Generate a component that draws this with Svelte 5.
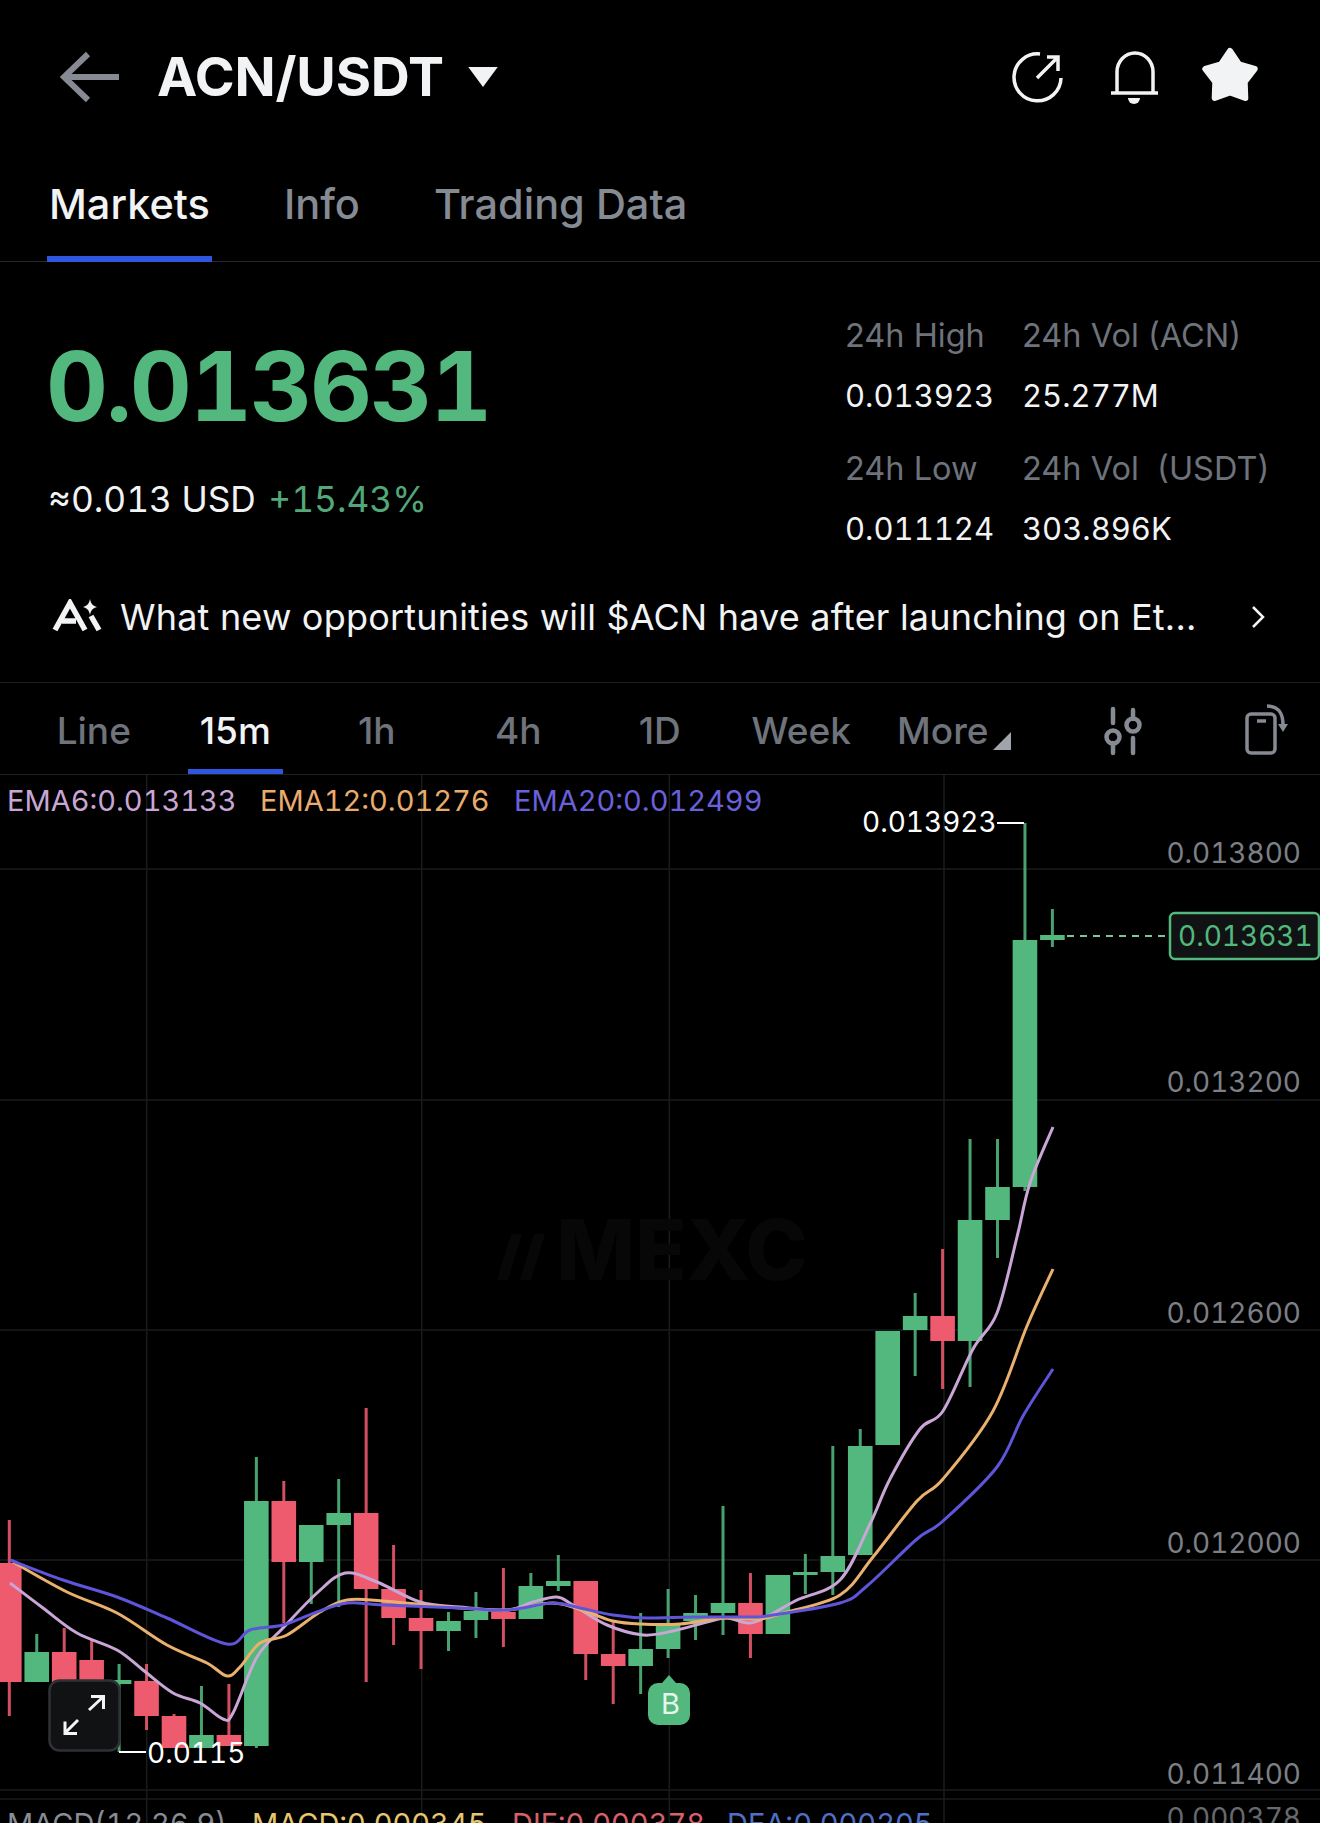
<script>
  const G = '#52b87e', R = '#ee5a6e';
  // [bodyTop, bodyBottom, wickTop, wickBottom, colour]
  const raw = [
    [1563,1682,1520,1716,R],[1652,1682,1634,1682,G],[1652,1682,1628,1682,R],[1660,1682,1640,1682,R],
    [1680,1684,1664,1752,G],[1681,1716,1664,1730,R],[1716,1748,1714,1748,R],[1735,1748,1686,1748,G],
    [1735,1746,1684,1746,R],[1501,1746,1457,1748,G],[1501,1562,1481,1623,R],[1525,1562,1525,1604,G],
    [1513,1525,1479,1607,G],[1513,1589,1408,1682,R],[1589,1618,1545,1645,R],[1618,1631,1590,1669,R],
    [1621,1631,1612,1651,G],[1611,1620,1592,1638,G],[1612,1619,1568,1647,R],[1586,1619,1573,1619,G],
    [1581,1586,1555,1591,G],[1581,1654,1581,1680,R],[1654,1666,1620,1704,R],[1649,1666,1613,1694,G],
    [1625,1649,1589,1658,G],[1613,1621,1595,1640,G],[1603,1613,1506,1635,G],[1603,1634,1573,1658,R],
    [1575,1634,1575,1634,G],[1572,1575,1554,1594,G],[1556,1572,1446,1595,G],[1446,1555,1429,1555,G],
    [1331,1445,1331,1445,G],[1316,1330,1293,1376,G],[1316,1341,1249,1389,R],[1220,1341,1139,1387,G],
    [1187,1220,1139,1258,G],[940,1187,823,1191,G],[935,940,909,947,G]
  ];
  const candles = raw.map((c, i) => ({ x: 9.3 + 27.45 * i, top: c[0], bot: c[1], wt: c[2], wb: c[3], col: c[4] }));

  const ema6 = [[10,1583],[43,1608],[77,1633],[117,1650],[143,1670],[173,1693],[200,1703],[223,1719],[233,1713],[257,1657],[283,1628],[317,1593],[345,1573],[377,1582],[420,1602],[460,1607],[507,1610],[533,1602],[557,1597],[573,1605],[607,1625],[643,1635],[673,1631],[707,1622],[727,1618],[750,1623],[770,1615],[797,1600],[840,1580],[870,1524],[890,1479],[920,1429],[943,1411],[973,1349],[997,1313],[1017,1237],[1030,1183],[1053,1127]];
  const ema12 = [[13,1562],[67,1592],[117,1613],[167,1645],[207,1663],[227,1676],[240,1667],[260,1643],[287,1635],[320,1612],[347,1600],[383,1601],[460,1608],[507,1610],[553,1603],[587,1612],[613,1621],[640,1624],[680,1624],[723,1618],[760,1619],[787,1612],[840,1595],[873,1557],[917,1501],[943,1479],[993,1411],[1027,1326],[1053,1269]];
  const ema20 = [[10,1560],[63,1580],[117,1597],[167,1618],[227,1644],[250,1630],[283,1625],[317,1612],[347,1603],[383,1605],[460,1608],[507,1610],[553,1603],[580,1608],[613,1615],[647,1618],[693,1617],[753,1617],[773,1615],[840,1603],[867,1586],[917,1539],[943,1521],[997,1467],[1023,1416],[1053,1369]];

  function smooth(p) {
    let d = `M${p[0][0]} ${p[0][1]}`;
    for (let i = 0; i < p.length - 1; i++) {
      const a = p[i - 1] || p[i], b = p[i], c = p[i + 1], e = p[i + 2] || c;
      const c1x = b[0] + (c[0] - a[0]) / 6, c1y = b[1] + (c[1] - a[1]) / 6;
      const c2x = c[0] - (e[0] - b[0]) / 6, c2y = c[1] - (e[1] - b[1]) / 6;
      d += ` C${c1x.toFixed(1)} ${c1y.toFixed(1)} ${c2x.toFixed(1)} ${c2y.toFixed(1)} ${c[0]} ${c[1]}`;
    }
    return d;
  }

  const axis = [['0.013800',863],['0.013200',1092],['0.012600',1323],['0.012000',1553],['0.011400',1784]];
  const hLines = [869,1100,1330,1560,1790,1799];
  const vLines = [146.7,421.7,669.3,944];

  const star = (() => {
    const pts = [];
    for (let i = 0; i < 10; i++) {
      const r = i % 2 ? 15.5 : 26;
      const a = -Math.PI / 2 + i * Math.PI / 5;
      pts.push(`${(1230 + r * Math.cos(a)).toFixed(1)},${(77 + r * Math.sin(a)).toFixed(1)}`);
    }
    return pts.join(' ');
  })();

  const intervals = ['Line','15m','1h','4h','1D','Week','More'];
</script>

<div class="page">
  <header class="top">
    <svg class="back" width="62" height="52" viewBox="60 51 62 52"><path d="M119 77H64M88 54 64 77l24 23"/></svg>
    <h1>ACN/USDT</h1>
    <svg class="caret" width="30" height="20" viewBox="0 0 28 19"><path d="M0 0h28L14 19z"/></svg>
    <svg class="acts" width="180" height="64" viewBox="1005 45 260 64">
      <g class="ic">
        <path d="M1040 54A23.5 23.5 0 1 0 1061 78"/>
        <path d="M1037 78 1058 57M1047 57h11v14"/>
      </g>
      <g class="ic bell">
        <path d="M1117 93V72a18 19 0 0 1 36 0V93" />
        <path d="M1111 93h47"/>
        <path class="solid" d="M1128 98h12a6 6 0 0 1-12 0z"/>
      </g>
      <polygon class="star" points={star}/>
    </svg>
  </header>

  <nav class="tabs">
    <span class="tab on">Markets</span>
    <span class="tab">Info</span>
    <span class="tab">Trading Data</span>
  </nav>

  <section class="quote">
    <div class="left">
      <div class="price">0.013631</div>
      <div class="usd">≈0.013 USD <span>+15.43%</span></div>
    </div>
    <div class="stats">
      <span class="k">24h High</span><span class="k">24h Vol (ACN)</span>
      <span class="v">0.013923</span><span class="v">25.277M</span>
      <span class="k low">24h Low</span><span class="k low">24h Vol&nbsp; (USDT)</span>
      <span class="v">0.011124</span><span class="v">303.896K</span>
    </div>
  </section>

  <div class="news">
    <svg class="ai" width="52" height="36" viewBox="52 601 52 36">
      <path d="M55 632 70 605 85 632M62 623h14"/>
      <path d="M91 618 99 632"/>
      <path class="solid" d="M90 601c1 5 3 7 7 8-4 1-6 3-7 8-1-5-3-7-7-8 4-1 6-3 7-8z"/>
    </svg>
    <span class="ntext">What new opportunities will $ACN have after launching on Et...</span>
    <svg class="chev" width="14" height="24" viewBox="0 0 14 24"><path d="M2 2l10 10L2 22"/></svg>
  </div>

  <div class="bar">
    {#each intervals as t}
      <span class="iv" class:on={t === '15m'}>{t}{#if t === 'More'}<svg class="more" width="18" height="18" viewBox="0 0 18 18"><path d="M0 18h18V0z"/></svg>{/if}</span>
    {/each}
    <svg class="tools" width="200" height="54" viewBox="1095 704 200 54">
      <g class="tool">
        <path d="M1113 709v14M1113 743v10M1133 710v9M1133 738v15"/>
        <circle cx="1113" cy="737" r="6.500"/>
        <circle cx="1133" cy="725" r="6.500"/>
      </g>
      <g class="tool thin">
        <rect x="1247" y="714" width="28" height="39" rx="4"/>
        <path d="M1257 721h9M1267 706c10 0 16 5 16 19"/>
        <path class="fillp" d="M1278 724h10l-5 8z"/>
      </g>
    </svg>
  </div>

  <div class="chart">
    <svg width="1320" height="1048" viewBox="0 775 1320 1048">
      {#each hLines as y}<line class="grid" x1="0" x2="1320" y1={y} y2={y}/>{/each}
      {#each vLines as x}<line class="grid" x1={x} x2={x} y1="775" y2="1823"/>{/each}

      <path class="mark" d="M497 1280l14-46 11 0-14 46zM520 1280l14-46 11 0-14 46z"/>
      <text class="mark" x="556" y="1280">MEXC</text>

      <text class="lab" fill="#c9a6d6" x="7" y="811">EMA6:0.013133</text>
      <text class="lab" fill="#e8ac6c" x="260" y="811">EMA12:0.01276</text>
      <text class="lab" fill="#6a60dc" x="514" y="811">EMA20:0.012499</text>

      {#each candles as c}
        <rect x={c.x - 1.500} y={c.wt} width="3" height={c.wb - c.wt} fill={c.col} opacity="0.88"/>
        <rect x={c.x - 12.300} y={c.top} width="24.600" height={c.bot - c.top} fill={c.col}/>
      {/each}

      <path class="ema" stroke="#c9a6d6" d={smooth(ema6)}/>
      <path class="ema" stroke="#eab06e" d={smooth(ema12)}/>
      <path class="ema" stroke="#5f55da" d={smooth(ema20)}/>

      {#each axis as a}<text class="ax" x="1301" y={a[1]} text-anchor="end">{a[0]}</text>{/each}

      <text class="wt" x="862" y="832">0.013923</text>
      <line class="lead" x1="997" x2="1024" y1="823" y2="823"/>

      <line class="dash" x1="1067" x2="1168" y1="936" y2="936"/>
      <rect class="pbox" x="1170" y="913" width="149" height="46" rx="5"/>
      <text class="ptext" x="1178" y="946">0.013631</text>

      <rect class="xbtn" x="49.500" y="1680.500" width="70" height="70" rx="10"/>
      <path class="xarr" d="M89 1710 103 1697M91 1696.500h12.500V1709M78 1720 65 1733M65 1721.500V1733.500H77"/>
      <line class="lead" x1="119" x2="146" y1="1752" y2="1752"/>
      <text class="wt" x="147" y="1763">0.0115</text>

      <path fill="#52b87e" d="M669 1675l7 8h4a10 10 0 0 1 10 10v22a10 10 0 0 1-10 10h-22a10 10 0 0 1-10-10v-22a10 10 0 0 1 10-10h4z"/>
      <text class="bm" x="670.500" y="1714" text-anchor="middle">B</text>

      <text class="lab" fill="#878c95" x="7" y="1834">MACD(12,26,9)</text>
      <text class="lab" fill="#e6c66e" x="252" y="1834">MACD:0.000345</text>
      <text class="lab" fill="#d8606c" x="512" y="1834">DIF:0.000378</text>
      <text class="lab" fill="#4f70c8" x="727" y="1834">DEA:0.000205</text>
      <text class="ax dim" x="1301" y="1828" text-anchor="end">0.000378</text>
    </svg>
  </div>
</div>

<style>
  :global(body) { margin: 0; background: #000; }
  .page {
    width: 1320px; height: 1823px; overflow: hidden; background: #000; color: #f1f3f5;
    font-family: Inter, "Liberation Sans", sans-serif;
  }
  svg { display: block; }

  .top { height: 154px; display: flex; align-items: center; padding-left: 60px; }
  .back path { fill: none; stroke: #858a93; stroke-width: 6; }
  h1 { margin: 0 0 0 35px; font-size: 54px; font-weight: 700; letter-spacing: -0.2px; line-height: 1; }
  .caret { margin-left: 24px; }
  .caret path { fill: #f1f3f5; }
  .acts { margin-left: auto; width: 260px; height: 64px; margin-right: 55px; }
  .ic path { fill: none; stroke: #f1f3f5; stroke-width: 3.500; }
  .ic path.solid { fill: #f1f3f5; stroke: none; }
  .star { fill: #f1f3f5; stroke: #f1f3f5; stroke-width: 6; stroke-linejoin: round; }

  .tabs { height: 108px; box-sizing: border-box; display: flex; gap: 70px; padding-left: 47px; border-bottom: 1px solid #26282c; }
  .tab { height: 108px; box-sizing: border-box; padding: 26px 2px 0; border-bottom: 6px solid transparent; font-size: 41.500px; font-weight: 500; line-height: 48px; color: #858a93; }
  .tab.on { color: #f1f3f5; border-bottom-color: #2f57de; }

  .quote { height: 301px; box-sizing: border-box; display: flex; justify-content: space-between; padding-left: 46px; }
  .price { margin-top: 68px; font-size: 96px; line-height: 112px; font-weight: 700; color: #52b87e; letter-spacing: -2px; font-variant-numeric: tabular-nums; }
  .usd { margin-top: 36px; margin-left: 2px; font-size: 35.300px; line-height: 44px; color: #f1f3f5; font-variant-numeric: tabular-nums; }
  .usd span { color: #52a878; margin-left: 3px; }
  .stats { display: grid; grid-template-columns: 177px auto; margin: 44px 19px 0 0; width: 456px; align-content: start; }
  .k { font-size: 32.500px; line-height: 60px; color: #6e727a; white-space: nowrap; }
  .k.low { margin-top: 13px; }
  .v { font-size: 31px; line-height: 60px; color: #f1f3f5; white-space: nowrap; font-variant-numeric: tabular-nums; }

  .news { height: 120px; box-sizing: border-box; display: flex; align-items: center; padding: 0 55px 12px 52px; border-bottom: 1px solid #1f2023; }
  .ai { flex: none; }
  .ai path { fill: none; stroke: #f1f3f5; stroke-width: 5.500; }
  .ai path.solid { fill: #f1f3f5; stroke: none; }
  .ntext { margin-left: 16px; font-size: 36px; letter-spacing: 0.2px; white-space: nowrap; flex: 1; }
  .chev path { fill: none; stroke: #f1f3f5; stroke-width: 2.500; }

  .bar { height: 92px; box-sizing: border-box; display: flex; padding-left: 23px; border-bottom: 1px solid #1f2023; }
  .iv { position: relative; width: 141.500px; height: 91px; box-sizing: border-box; text-align: center; line-height: 95px; font-size: 37px; font-weight: 500; color: #6f737b; }
  .iv.on { color: #f1f3f5; }
  .iv.on::after { content: ""; position: absolute; left: 23px; right: 23px; bottom: 0; height: 5px; background: #2f57de; }
  .more { position: absolute; left: 121px; top: 49px; }
  .more path { fill: #a0a4ac; }
  .tools { flex: none; margin-top: 21px; margin-left: 81.500px; }
  .tool { fill: none; stroke: #858a93; stroke-width: 4.500; stroke-linecap: round; }
  .tool.thin { stroke-width: 3.500; stroke-linecap: butt; }
  .tool .fillp { fill: #858a93; stroke: none; }

  .chart { height: 1048px; }
  .chart text { font-variant-numeric: tabular-nums; }
  .grid { stroke: #1a1b1d; stroke-width: 1.500; }
  .mark { font-family: Inter, sans-serif; font-weight: 800; font-size: 84px; fill: #070707; }
  .lab { font-size: 29px; }
  .ema { fill: none; stroke-width: 3; stroke-linejoin: round; }
  .ax { fill: #7c7f85; font-size: 28px; }
  .ax.dim { fill: #66696e; }
  .wt { fill: #fff; font-size: 28px; }
  .lead { stroke: #fff; stroke-width: 2; }
  .dash { stroke: #7cc49c; stroke-width: 2; stroke-dasharray: 7 6; }
  .pbox { fill: #101213; stroke: #52b87e; stroke-width: 2.500; }
  .ptext { fill: #52b87e; font-size: 28px; }
  .xbtn { fill: #101214; stroke: #2f3134; stroke-width: 2.500; }
  .xarr { fill: none; stroke: #f4f5f6; stroke-width: 3; }
  .bm { fill: #e4f6ea; font-size: 29px; }
</style>
